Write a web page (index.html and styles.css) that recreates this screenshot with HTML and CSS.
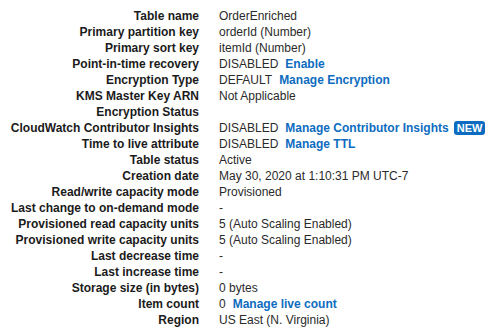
FILE: index.html
```html
<!DOCTYPE html>
<html>
<head>
<meta charset="utf-8">
<link rel="stylesheet" href="styles.css">
</head>
<body>
<dl class="details">
  <dt>Table name</dt><dd>OrderEnriched</dd>
  <dt>Primary partition key</dt><dd>orderId (Number)</dd>
  <dt>Primary sort key</dt><dd>itemId (Number)</dd>
  <dt>Point-in-time recovery</dt><dd>DISABLED <a class="link">Enable</a></dd>
  <dt>Encryption Type</dt><dd>DEFAULT <a class="link">Manage Encryption</a></dd>
  <dt>KMS Master Key ARN</dt><dd>Not Applicable</dd>
  <dt>Encryption Status</dt><dd></dd>
  <dt>CloudWatch Contributor Insights</dt><dd>DISABLED <a class="link">Manage Contributor Insights</a><span class="badge">NEW</span></dd>
  <dt>Time to live attribute</dt><dd>DISABLED <a class="link">Manage TTL</a></dd>
  <dt>Table status</dt><dd>Active</dd>
  <dt>Creation date</dt><dd>May 30, 2020 at 1:10:31 PM UTC-7</dd>
  <dt>Read/write capacity mode</dt><dd>Provisioned</dd>
  <dt>Last change to on-demand mode</dt><dd>-</dd>
  <dt>Provisioned read capacity units</dt><dd>5 (Auto Scaling Enabled)</dd>
  <dt>Provisioned write capacity units</dt><dd>5 (Auto Scaling Enabled)</dd>
  <dt>Last decrease time</dt><dd>-</dd>
  <dt>Last increase time</dt><dd>-</dd>
  <dt>Storage size (in bytes)</dt><dd>0 bytes</dd>
  <dt>Item count</dt><dd>0 <a class="link">Manage live count</a></dd>
  <dt>Region</dt><dd>US East (N. Virginia)</dd>
</dl>
</body>
</html>
```
FILE: styles.css
```css
html, body {
  margin: 0;
  padding: 0;
  background: #ffffff;
}
body {
  font-family: "Liberation Sans", Arial, Helvetica, sans-serif;
  font-size: 12px;
  line-height: 16px;
  color: #222;
}
.details {
  margin: 0;
  padding: 8px 0 0 0;
  display: grid;
  grid-template-columns: 199px 1fr;
  column-gap: 20px;
}
.details dt {
  font-weight: bold;
  text-align: right;
  color: #1b1b1b;
  white-space: nowrap;
  height: 16px;
}
.details dd {
  margin: 0;
  color: #2a2a2a;
  white-space: nowrap;
  display: flex;
  align-items: center;
  height: 16px;
}
.link {
  color: #0d6cbf;
  font-weight: bold;
  margin-left: 7px;
}
.badge {
  display: inline-block;
  margin-left: 5px;
  background: #0d6cbf;
  color: #fff;
  font-weight: bold;
  font-size: 11px;
  line-height: 14px;
  height: 14px;
  padding: 0 3px;
  border-radius: 3px;
}
```
